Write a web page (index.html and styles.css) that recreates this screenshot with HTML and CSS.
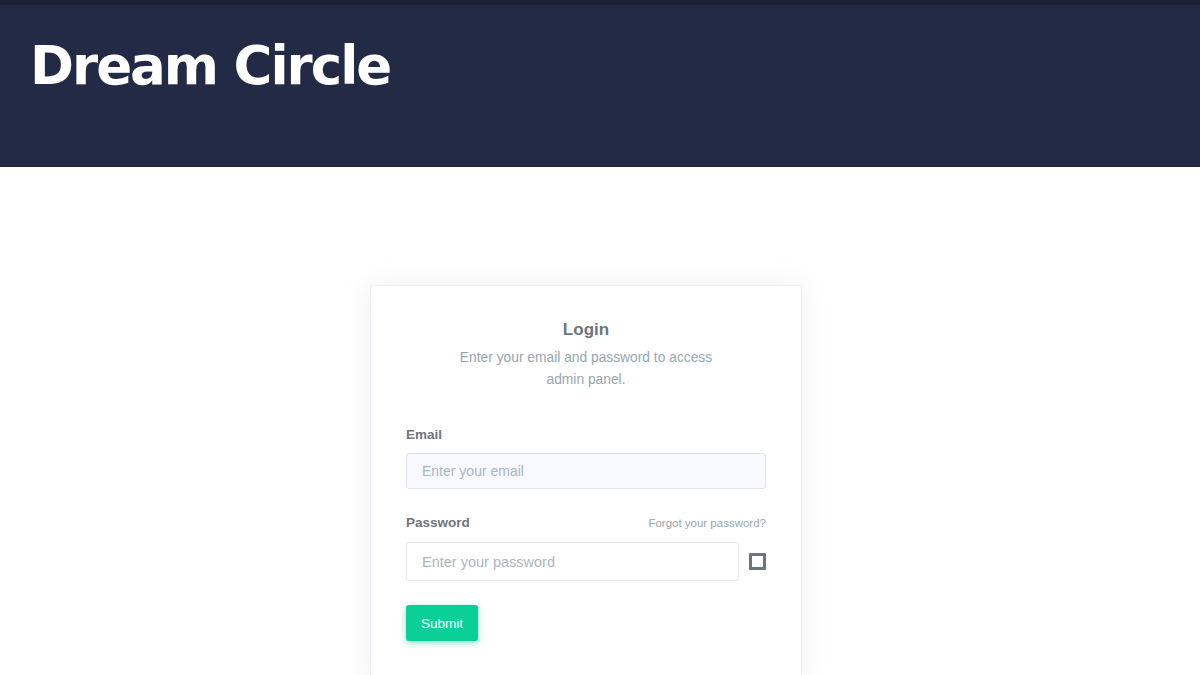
FILE: index.html
```html
<!DOCTYPE html>
<html lang="en">
<head>
<meta charset="utf-8">
<title>Dream Circle - Login</title>
<link rel="stylesheet" href="styles.css">
</head>
<body>
<header class="topbar">
  <div class="topbar-strip"></div>
  <div class="topbar-main">
    <h1 class="brand">Dream Circle</h1>
  </div>
</header>
<main class="page">
  <div class="card">
    <div class="card-head">
      <h2 class="card-title">Login</h2>
      <p class="card-sub">Enter your email and password to access admin panel.</p>
    </div>
    <form class="form">
      <div class="field">
        <label class="label" for="email">Email</label>
        <input class="input input-email" id="email" type="email" placeholder="Enter your email">
      </div>
      <div class="field">
        <div class="label-row">
          <label class="label" for="password">Password</label>
          <a class="forgot" href="#">Forgot your password?</a>
        </div>
        <div class="pw-row">
          <input class="input input-pw" id="password" type="password" placeholder="Enter your password">
          <span class="check"></span>
        </div>
      </div>
      <button class="btn" type="button">Submit</button>
    </form>
  </div>
</main>
</body>
</html>
```
FILE: styles.css
```css
html, body {
  margin: 0;
  padding: 0;
  background: #ffffff;
}
body {
  font-family: "Liberation Sans", Arial, sans-serif;
  color: #6c757d;
  height: 675px;
  overflow: hidden;
}
.topbar {
  background: #232a45;
  height: 167px;
}
.topbar-strip {
  height: 5px;
  background: #1e2134;
}
.topbar-main {
  padding: 0 0 0 30px;
}
.brand {
  margin: 0;
  padding-top: 26px;
  font-family: "DejaVu Sans", sans-serif;
  font-weight: 700;
  font-size: 53px;
  line-height: 70px;
  letter-spacing: -2px;
  color: #ffffff;
}
.page {
  display: flex;
  justify-content: center;
  padding-top: 118px;
  padding-right: 28px;
}
.card {
  width: 360px;
  padding: 34px 35px 40px 35px;
  background: #fff;
  border: 1px solid #eef0f5;
  border-radius: 3px;
  box-shadow: 0 0 24px rgba(154, 161, 171, 0.18);
  min-height: 320px;
}
.card-head {
  text-align: center;
  padding: 0 36px;
}
.card-title {
  margin: 0;
  font-size: 17px;
  font-weight: 700;
  color: #6c757d;
  line-height: 20px;
}
.card-sub {
  margin: 7px 0 0 0;
  font-size: 13.8px;
  line-height: 22px;
  color: #98a6ad;
}
.form {
  margin-top: 35px;
}
.field {
  margin-bottom: 24px;
}
.field:first-child {
  margin-bottom: 25px;
}
.label {
  display: block;
  font-size: 13.5px;
  font-weight: 700;
  color: #6c757d;
  line-height: 18px;
  margin-bottom: 9px;
}
.label-row {
  display: flex;
  justify-content: space-between;
  align-items: baseline;
}
.label-row .label {
  margin-bottom: 10px;
}
.forgot {
  font-size: 11.5px;
  color: #98a6ad;
  text-decoration: none;
}
.input {
  display: block;
  box-sizing: border-box;
  width: 100%;
  font-family: "Liberation Sans", Arial, sans-serif;
  font-size: 14px;
  color: #6c757d;
  border-radius: 3px;
  outline: none;
}
.input::placeholder {
  color: #adb5bd;
}
.input-email {
  height: 36px;
  padding: 0 15px;
  background: #f7f9fe;
  border: 1px solid #dfe3ea;
}
.input-pw {
  height: 39px;
  padding: 0 15px;
  background: #fff;
  border: 1px solid #e7eaef;
  font-size: 14.5px;
}
.pw-row {
  display: flex;
  align-items: center;
  gap: 10px;
}
.pw-row .input-pw {
  flex: 1;
  width: auto;
}
.check {
  flex: none;
  width: 11px;
  height: 11px;
  border: 3px solid #6c757d;
  border-radius: 1px;
}
.btn {
  display: block;
  height: 36px;
  padding: 0 15px;
  background: #0acf97;
  border: none;
  border-radius: 3px;
  color: #fff;
  font-family: "Liberation Sans", Arial, sans-serif;
  font-size: 13.5px;
  box-shadow: 0 2px 6px rgba(10, 207, 151, 0.5);
}
```
